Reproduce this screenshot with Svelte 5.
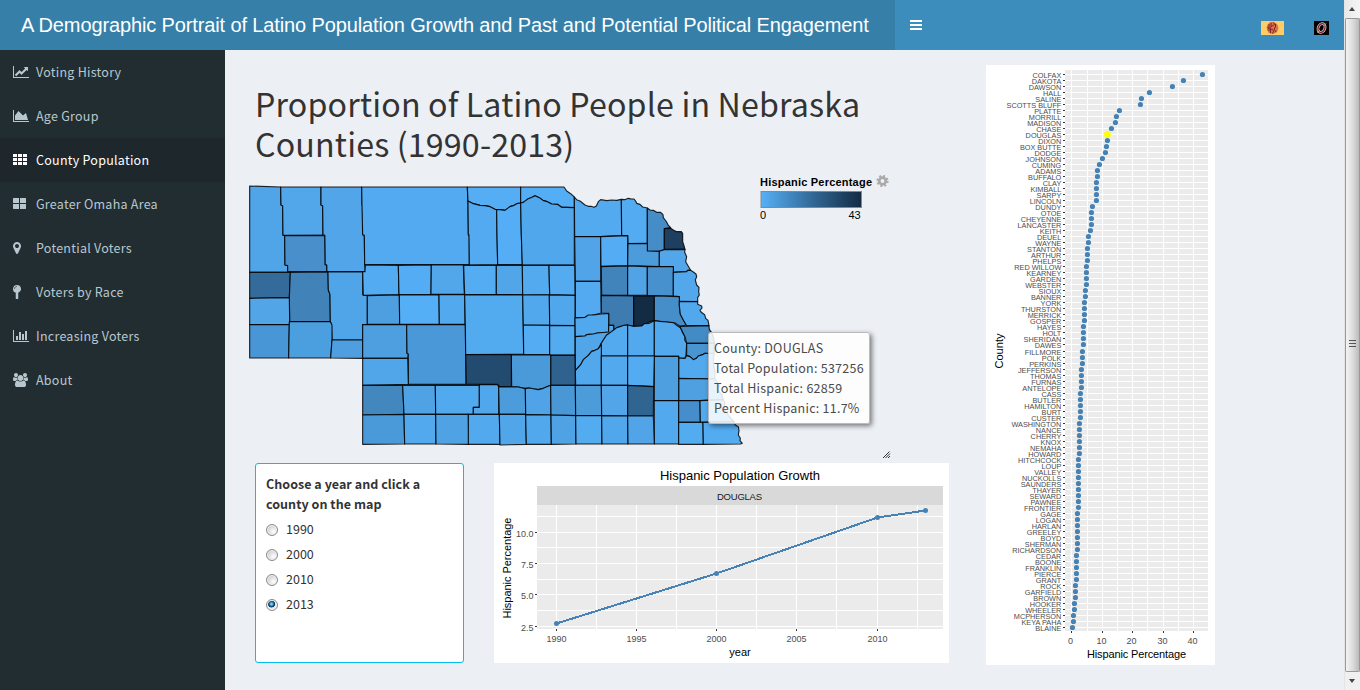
<script>
  const menu = [
    { label: 'Voting History', icon: 'line' },
    { label: 'Age Group', icon: 'area' },
    { label: 'County Population', icon: 'th', active: true },
    { label: 'Greater Omaha Area', icon: 'large' },
    { label: 'Potential Voters', icon: 'marker' },
    { label: 'Voters by Race', icon: 'pin' },
    { label: 'Increasing Voters', icon: 'bar' },
    { label: 'About', icon: 'users' }
  ];

  const icons = {
    line: 'M2048 1536v128h-2048v-1536h128v1408h1920zM1920 288v435q0 21-19.5 29.5t-35.5-7.5l-121-121-633 633q-10 10-23 10t-23-10l-233-233-416 416-192-192 585-585q10-10 23-10t23 10l233 233 464-464-121-121q-16-16-7.5-35.5t29.5-19.5h435q14 0 23 9t9 23z',
    area: 'M2048 1536v128h-2048v-1536h128v1408h1920zM1664 512l256 896h-1664v-576l448-576 576 576z',
    th: 'M0 128h512v384h-512zM640 128h512v384h-512zM1280 128h512v384h-512zM0 640h512v384h-512zM640 640h512v384h-512zM1280 640h512v384h-512zM0 1152h512v384h-512zM640 1152h512v384h-512zM1280 1152h512v384h-512z',
    large: 'M64 128h704v640h-768v-576zM896 128h704l64 64v576h-768zM0 896h768v640h-704l-64-64zM896 896h768v576l-64 64h-704z',
    marker: 'M768 640q0-106-75-181t-181-75-181 75-75 181 75 181 181 75 181-75 75-181zM1024 640q0 109-33 179l-364 774q-16 33-47.5 52t-67.5 19-67.5-19-46.5-52l-365-774q-33-70-33-179 0-212 150-362t362-150 362 150 150 362z',
    pin: 'M512 0a512 512 0 0 1 160 998v730q0 64-64 64h-192q-64 0-64-64v-730a512 512 0 0 1 160-998zM512 224v-64q-340 10-352 352h64q10-278 288-288z',
    bar: 'M640 896v512h-256v-512h256zM1024 384v1024h-256v-1024h256zM2048 1536v128h-2048v-1536h128v1408h1920zM1408 640v768h-256v-768h256zM1792 256v1152h-256v-1152h256z',
    users: 'M593 896q-162 5-265 128h-134q-82 0-138-40.500t-56-118.500q0-353 124-353 6 0 43.500 21t97.500 42.500 119 21.500q67 0 133-23-5 37-5 66 0 139 81 256zM1664 1533q0 120-73 189.500t-194 69.500h-874q-121 0-194-69.500t-73-189.500q0-53 3.500-103.500t14-109 26.500-108.500 43-97.500 62-81 85.500-53.500 111.500-20q10 0 43 21.500t73 48 107 48 135 21.500 135-21.500 107-48 73-48 43-21.500q61 0 111.500 20t85.500 53.500 62 81 43 97.500 26.500 108.500 14 109 3.500 103.500zM640 256q0 106-75 181t-181 75-181-75-75-181 75-181 181-75 181 75 75 181zM1344 640q0 159-112.500 271.500t-271.500 112.500-271.500-112.500-112.500-271.500 112.500-271.500 271.500-112.500 271.500 112.500 112.500 271.500zM1920 865q0 78-56 118.500t-138 40.500h-134q-103-123-265-128 81-117 81-256 0-29-5-66 66 23 133 23 59 0 119-21.500t97.500-42.500 43.500-21q124 0 124 353zM1792 256q0 106-75 181t-181 75-181-75-75-181 75-181 181-75 181 75 75 181z'
  };

  // County outlines, [fill, points]; each group is drawn at one third scale from its own origin.
  const west = [
    ['#50a4e8', '29,33 122,36 123,90 128,92 129,180 134,182 135,270 143,272 143,291 29,292'],
    ['#52a7ea', '122,36 243,36 243,90 248,92 249,180 129,181 128,92 123,90'],
    ['#51a5e8', '243,36 365,36 366,90 368,92 368,179 373,181 374,268 376,290 260,290 260,270 255,268 254,181 249,180 248,92 243,90'],
    ['#53aaf0', '365,36 682,36 684,90 685,180 688,182 688,269 374,269 373,181 368,179 366,90'],
    ['#488fcb', '134,182 254,181 255,269 260,271 260,290 143,290 143,272 135,270'],
    ['#356b9b', '29,292 151,292 148,368 29,370'],
    ['#4183b9', '151,292 264,291 265,345 270,358 271,440 149,440 148,368'],
    ['#52a5e7', '29,370 148,368 149,440 148,449 29,449'],
    ['#50a4e8', '264,291 368,290 368,359 382,362 382,448 368,449 368,495 276,495 274,448 271,440 270,358 265,345'],
    ['#4896d5', '29,449 148,449 146,549 29,549'],
    ['#4c9fdf', '148,440 271,440 276,450 276,495 273,540 272,549 146,549'],
    ['#4f9fe0', '276,495 368,495 368,550 272,549'],
    ['#53acf2', '376,270 475,271 477,359 370,361 368,290 375,290'],
    ['#54adf4', '475,271 574,270 573,358 477,359'],
    ['#51a7ea', '574,270 670,270 673,358 573,358'],
    ['#4d9fe0', '382,362 478,360 479,448 382,448'],
    ['#55aff6', '478,360 597,359 598,448 479,448'],
    ['#52a9ee', '597,359 674,359 675,448 598,448'],
    ['#4d9fdf', '368,449 500,449 501,535 505,537 503,550 368,550'],
    ['#4a98d7', '500,449 676,449 678,628 505,628 505,537 501,535'],
    ['#51a6e9', '368,550 503,550 505,628 368,631'],
    ['#4288bf', '368,631 488,631 492,718 368,720'],
    ['#4fa2e3', '488,631 586,631 587,718 492,718'],
    ['#52aaee', '586,631 718,631 718,697 700,697 700,718 587,718'],
    ['#4a99d9', '368,720 492,718 494,807 368,808'],
    ['#52a9ee', '492,718 587,718 588,807 494,807'],
    ['#4fa2e4', '587,718 685,718 686,808 588,807']
  ];

  const northeast = [
    ['#55adf4', '22,36 182,36 183,84 170,86 160,92 150,95 135,106 120,104 105,103 90,95 75,92 60,91 40,86 24,78'],
    ['#54aef5', '182,36 312,36 320,48 332,56 343,66 343,98 318,97 305,97 292,88 275,87 262,80 250,77 238,68 225,62 216,67 205,71 190,82 182,84'],
    ['#53aaf0', '24,78 40,86 60,91 75,92 90,95 105,103 110,104 111,180 113,269 28,270 27,180 25,178'],
    ['#55aef5', '110,104 120,104 135,106 150,95 160,92 170,86 182,84 184,180 187,269 113,269 111,180'],
    ['#51a7eb', '182,84 190,82 205,71 216,67 225,62 238,68 250,77 262,80 275,87 292,88 305,97 318,97 343,98 343,270 187,270 184,180'],
    ['#53aaef', '343,66 350,74 360,78 375,90 385,94 393,94 402,97 409,93 415,80 422,74 440,77 455,75 470,76 484,73 485,182 422,185 344,184'],
    ['#53abf1', '484,73 494,74 505,70 514,72 522,72 528,80 530,85 540,88 548,96 562,99 562,205 504,206 503,182 485,182'],
    ['#468cc7', '562,99 570,105 580,106 590,112 602,112 609,119 610,128 620,141 624,150 632,158 613,161 613,223 599,229 562,228'],
    ['#1f3f60', '613,161 632,160 640,165 650,170 664,170 668,175 668,200 672,212 675,223 613,223'],
    ['#50a4e7', '344,185 422,185 422,319 346,319'],
    ['#54adf4', '422,185 503,182 503,272 423,274'],
    ['#4c9bda', '504,206 562,205 562,228 598,229 598,275 503,272'],
    ['#52a6e9', '598,229 613,224 675,223 674,232 680,245 677,260 684,272 692,286 683,286 680,290 640,292 640,275 598,275'],
    ['#4184bb', '424,275 503,273 503,361 425,361'],
    ['#50a3e5', '503,273 562,275 562,361 503,361'],
    ['#4791ce', '562,275 640,275 640,363 562,361'],
    ['#52a8eb', '640,292 680,290 683,286 692,286 700,291 708,297 710,305 706,315 710,330 717,337 716,350 718,360 713,368 713,380 658,379 658,365 640,363'],
    ['#54aaf0', '346,319 422,319 424,414 400,420 375,427 346,428'],
    ['#3e7bb0', '424,361 521,363 521,454 500,450 480,455 461,465 461,451 446,450 446,416 424,414'],
    ['#132b43', '521,363 583,363 583,437 570,440 560,446 545,453 521,454'],
    ['#468ec9', '583,363 658,365 658,392 661,418 670,435 679,450 660,454 645,444 620,441 600,440 583,437'],
    ['#52a8ed', '658,379 713,380 713,388 725,393 726,399 720,406 724,412 734,419 737,430 744,436 747,452 679,451 670,435 661,418 658,392'],
    ['#54acf2', '11,271 109,271 109,359 14,359'],
    ['#51a6e9', '109,271 187,271 188,359 109,359'],
    ['#53aaee', '187,271 267,271 269,359 188,360'],
    ['#54abef', '267,271 344,271 345,361 269,359'],
    ['#52aaef', '14,359 188,360 191,538 17,539 16,450'],
    ['#52a8ec', '188,360 268,360 269,451 190,450'],
    ['#51a7eb', '268,360 345,361 345,452 269,451'],
    ['#54acf2', '190,450 269,451 269,539 191,538'],
    ['#53abf0', '269,451 345,452 345,540 269,540']
  ];

  const southeast = [
    ['#52a8ec', '345,24 375,22 385,15 400,15 425,12 446,10 446,66 435,68 412,69 400,72 380,74 375,78 346,80'],
    ['#51a6e9', '346,80 375,78 380,74 400,72 412,69 446,66 446,46 461,46 461,60 450,70 440,75 430,90 422,103 415,116 405,121 395,124 385,136 370,149 362,164 346,182'],
    ['#53aaef', '461,60 470,53 480,50 492,46 503,45 503,138 424,138 422,103 430,90 440,75'],
    ['#52a9ed', '503,45 521,49 545,48 553,41 568,40 583,32 583,138 503,138'],
    ['#52a9ed', '583,32 600,34 620,36 640,38 650,46 662,54 668,68 675,80 674,90 680,100 678,135 675,145 656,144 656,139 583,139'],
    ['#438bc5', '660,49 747,47 748,58 755,68 760,80 764,100 680,100 675,80 662,54'],
    ['#4895d2', '680,100 764,100 762,130 750,133 735,130 728,134 715,138 709,145 700,149 690,140 680,137'],
    ['#52a9ed', '656,144 675,145 680,137 690,140 700,149 709,145 715,138 728,134 735,130 762,130 760,160 765,185 764,207 656,205'],
    ['#4fa0e1', '656,205 764,207 778,225 775,240 785,255 790,269 720,272 656,272'],
    ['#4d9fe0', '583,139 656,139 656,272 583,272'],
    ['#52a8ec', '424,103 424,226 347,226 346,182 362,164 370,149 385,136 395,124 405,121 415,116'],
    ['#53a9ee', '424,138 503,138 503,226 424,226'],
    ['#53acf2', '503,138 583,138 581,230 503,226'],
    ['#306290', '272,136 345,136 346,226 272,226'],
    ['#4a99d8', '154,135 272,135 272,226 260,230 250,235 235,239 220,237 208,234 190,235 175,231 155,230'],
    ['#234b6f', '17,134 154,134 154,230 120,230 112,223 19,223'],
    ['#51a7eb', '58,224 112,224 116,230 116,313 40,313 40,292 58,292'],
    ['#4c9cdc', '116,230 175,231 196,236 197,313 118,313'],
    ['#4fa3e6', '196,236 208,234 235,239 250,235 272,226 273,315 197,314'],
    ['#4997d5', '272,226 346,226 347,317 273,315'],
    ['#4c9cda', '346,226 424,226 425,317 347,317'],
    ['#51a5e8', '424,226 503,226 503,318 425,317'],
    ['#306592', '503,226 581,230 580,318 503,318'],
    ['#52a9ee', '583,272 656,272 656,402 583,402'],
    ['#468ecb', '656,272 720,272 721,337 656,337'],
    ['#52aaee', '720,272 790,269 795,280 792,295 804,315 822,335 721,337'],
    ['#53abf0', '656,337 729,337 730,403 656,403'],
    ['#53abf0', '729,337 822,335 826,345 835,350 837,362 835,375 841,385 840,392 847,400 842,402 730,403'],
    ['#52a9ed', '25,313 118,313 120,403 25,403'],
    ['#51a6ea', '118,313 197,313 199,403 120,405'],
    ['#52a8ec', '197,314 273,315 274,403 199,403'],
    ['#4fa3e5', '273,315 347,317 348,402 274,403'],
    ['#53abf0', '347,317 425,317 426,402 348,402'],
    ['#51a7eb', '425,317 503,318 504,402 426,402'],
    ['#50a4e7', '503,318 580,318 583,402 504,402']
  ];

  const mapGroups = [
    { at: 'translate(0 0) scale(.33333)', counties: west },
    { at: 'translate(220 0) scale(.33333)', counties: northeast },
    { at: 'translate(220 135) scale(.33333)', counties: southeast }
  ];

  // Runs of counties sharing the same rounded percentage position on the dot plot.
  const runs = [
    [667, 'COLFAX'], [610, 'DAKOTA'], [577, 'DAWSON'], [508, 'HALL'], [484, 'SALINE'], [481, 'SCOTTS BLUFF'],
    [418, 'PLATTE'], [409, 'MORRILL'], [406, 'MADISON'], [394, 'CHASE'], [382, 'DOUGLAS,DIXON'], [379, 'BOX BUTTE'],
    [376, 'DODGE'], [367, 'JOHNSON'], [358, 'CUMING'], [352, 'ADAMS,BUFFALO'], [349, 'CLAY,KIMBALL,SARPY,LINCOLN'],
    [337, 'DUNDY'], [334, 'OTOE,CHEYENNE,LANCASTER'], [331, 'KEITH'], [325, 'DEUEL,WAYNE'],
    [322, 'STANTON,ARTHUR,PHELPS'], [319, 'RED WILLOW,KEARNEY,GARDEN,WEBSTER'], [316, 'SIOUX,BANNER'],
    [313, 'YORK,THURSTON,MERRICK,GOSPER'], [310, 'HAYES,HOLT,SHERIDAN,DAWES'], [307, 'FILLMORE,POLK,PERKINS'],
    [304, 'JEFFERSON,THOMAS,FURNAS,ANTELOPE'], [301, 'CASS,BUTLER,HAMILTON,BURT,CUSTER'],
    [298, 'WASHINGTON,NANCE,CHERRY,KNOX,NEMAHA,HOWARD'],
    [295, 'HITCHCOCK,LOUP,VALLEY,NUCKOLLS,SAUNDERS,THAYER,SEWARD,PAWNEE,FRONTIER'],
    [292, 'GAGE,LOGAN,HARLAN,GREELEY,BOYD,SHERMAN,RICHARDSON'], [289, 'CEDAR,BOONE,FRANKLIN,PIERCE,GRANT'],
    [286, 'ROCK,GARFIELD,BROWN'], [283, 'HOOKER,WHEELER'], [280, 'MCPHERSON,KEYA PAHA'], [277, 'BLAINE']
  ];
  const dots = runs.flatMap(([x, names]) => names.split(',').map((name) => ({ name, x: x / 3 - 5.9 })));
  const rowY = (i) => Math.round(9 + (i * 553) / (dots.length - 1)) + 0.5;
  const percentLines = [85.5, 101.5, 116.5, 131.5, 146.5, 161.5, 177.5, 192.5, 207.5];
  const percentTicks = [[85.5, '0'], [116.5, '10'], [146.5, '20'], [177.5, '30'], [207.5, '40']];

  const yearLines = [62.5, 102.5, 142.5, 182.5, 222.5, 262.5, 302.5, 342.5, 383.5, 423.5];
  const yearTicks = [[62.5, '1990'], [142.5, '1995'], [222.5, '2000'], [302.5, '2005'], [383.5, '2010']];
  const valueLines = [53.5, 69.5, 84.5, 100.5, 116.5, 131.5, 147.5, 163.5];
  const valueTicks = [[69.5, '10.0'], [100.5, '7.5'], [131.5, '5.0'], [163.5, '2.5']];
  const growth = [[62.5, 160.5], [222.5, 110.5], [383.5, 54.5], [431.5, 47.5]];

  const years = ['1990', '2000', '2010', '2013'];
  let year = $state('2013');
</script>

<div class="app">
  <header>
    <div class="brand"><span>A Demographic Portrait of Latino Population Growth and Past and Potential Political Engagement</span></div>
    <nav>
      <svg class="burger" width="12" height="10" viewBox="0 0 12 10"><path fill="#fff" d="M0 0h12v2H0zM0 4h12v2H0zM0 8h12v2H0z" /></svg>
      <div class="logos">
        <svg width="23" height="14" viewBox="0 0 23 14">
          <path fill="#fc6" d="M0 0h23v14H0z" />
          <circle cx="11.500" cy="7" r="5.900" fill="#dc714d" />
          <path d="M8 3v7M10 1.500v4M9.500 8v4M12 1.500c3 1 1 3-1 3.500s-2 3 0 3.500 2 3 0 4M14.500 3v3l-1.500 2 2 3M6.500 6l2 2" fill="none" stroke="#7d2427" stroke-width="1" />
        </svg>
        <svg width="15" height="14" viewBox="0 0 15 14">
          <path fill="#000" d="M0 0h15v14H0z" />
          <g transform="rotate(22 7.500 7)" fill="none"><ellipse cx="7.500" cy="7" rx="3.300" ry="4.600" stroke="#ccc" stroke-width="2.800" /><ellipse cx="7.500" cy="7" rx="3.300" ry="4.600" stroke="#7d1f2b" stroke-width="1.300" /></g>
          <path d="M3.500 11.500L6 9M9.500 5L12 2.500" stroke="#bbb" stroke-width=".8" />
        </svg>
      </div>
    </nav>
    <div class="scroll-head"><i class="up"></i></div>
  </header>

  <div class="body">
    <aside>
      {#each menu as item}
        <a class:active={item.active}>
          <svg width="16" height="14" viewBox="0 0 2048 1792"><path fill="currentColor" fill-rule="evenodd" d={icons[item.icon]} /></svg>
          <span>{item.label}</span>
        </a>
      {/each}
    </aside>

    <main>
      <section class="left">
        <h1>Proportion of Latino People in Nebraska<br />Counties (1990-2013)</h1>
        <div class="map">
          <svg width="720" height="288" viewBox="0 0 720 288">
            <defs>
              <linearGradient id="scale"><stop offset="0" stop-color="#56b1f7" /><stop offset=".5" stop-color="#336a98" /><stop offset="1" stop-color="#132b43" /></linearGradient>
            </defs>
            {#each mapGroups as group}
              <g transform={group.at}>
                {#each group.counties as [fill, points]}
                  <polygon {fill} {points} />
                {/each}
              </g>
            {/each}
            <text x="520" y="11" class="legend bold" textLength="112">Hispanic Percentage</text>
            <rect x="521" y="16.500" width="100.500" height="16" fill="url(#scale)" stroke="#888" />
            <text x="520" y="44" class="legend">0</text>
            <text x="608.500" y="44" class="legend">43</text>
            <g transform="translate(642.500 6)" fill="none" stroke="#aaa">
              <circle r="3.300" stroke-width="2.800" />
              <circle r="5.100" stroke-width="2" stroke-dasharray="2.003 2.003" />
            </g>
            <path d="M643 283l6.500-6.500M645.500 283l4.500-4.500M648 283l2-2" stroke="#333" stroke-width="1" />
          </svg>
          <div class="tooltip">
            <div>County: DOUGLAS</div>
            <div>Total Population: 537256</div>
            <div>Total Hispanic: 62859</div>
            <div>Percent Hispanic: 11.7%</div>
          </div>
        </div>

        <div class="row">
          <div class="box">
            <strong>Choose a year and click a<br />county on the map</strong>
            {#each years as y}
              <label>
                <input type="radio" name="year" value={y} bind:group={year} />
                <span>{y}</span>
              </label>
            {/each}
          </div>

          <svg class="growth" width="455" height="200" viewBox="0 0 455 200">
            <rect x="43" y="23" width="406" height="19" fill="#d9d9d9" />
            <rect x="43" y="42" width="406" height="124" fill="#ebebeb" />
            <g stroke="#fff">
              {#each yearLines as x}<path d="M{x} 42V166" />{/each}
              {#each valueLines as y}<path d="M43 {y}H449" />{/each}
            </g>
            <g stroke="#333">
              {#each yearTicks as [x]}<path d="M{x} 166v2" />{/each}
              {#each valueTicks as [y]}<path d="M41 {y}h2" />{/each}
            </g>
            <polyline points={growth.map((p) => p.join()).join(' ')} fill="none" stroke="#4682b4" stroke-width="2" shape-rendering="crispEdges" />
            {#each growth as [cx, cy]}<circle {cx} {cy} r="2.500" fill="#4682b4" />{/each}
            <text class="title" x="246" y="17" text-anchor="middle" textLength="160">Hispanic Population Growth</text>
            <text class="strip" x="245.500" y="37" text-anchor="middle" textLength="45">DOUGLAS</text>
            {#each yearTicks as [x, t]}<text class="tick" {x} y="179" text-anchor="middle">{t}</text>{/each}
            {#each valueTicks as [y, t]}<text class="tick" x="39.500" y={y + 4} text-anchor="end">{t}</text>{/each}
            <text class="axis" x="246" y="193" text-anchor="middle">year</text>
            <text class="axis" transform="translate(17 105) rotate(-90)" text-anchor="middle" textLength="101">Hispanic Percentage</text>
          </svg>
        </div>
      </section>

      <svg class="counties" width="229" height="600" viewBox="0 0 229 600">
        <rect x="79" y="5" width="143" height="561" fill="#ebebeb" />
        <g stroke="#fff">
          {#each percentLines as x}<path d="M{x} 5V566" />{/each}
          {#each dots as _, i}<path d="M79 {rowY(i)}H222" />{/each}
        </g>
        <g stroke="#333">
          {#each dots as _, i}<path d="M77 {rowY(i)}h2" />{/each}
          {#each percentTicks as [x]}<path d="M{x} 566v2" />{/each}
        </g>
        {#each dots as d, i}
          <text class="county" x="75.300" y={rowY(i) + 3.3} text-anchor="end">{d.name}</text>
          <circle cx={d.x} cy={rowY(i)} r={d.name === 'DOUGLAS' ? 3.4 : 2.6} fill={d.name === 'DOUGLAS' ? '#ff0' : '#4682b4'} />
        {/each}
        {#each percentTicks as [x, t]}<text class="tick" x={x - 1} y="579" text-anchor="middle">{t}</text>{/each}
        <text class="axis" x="150.500" y="593" text-anchor="middle" textLength="99">Hispanic Percentage</text>
        <text class="axis" transform="translate(17 286) rotate(-90)" text-anchor="middle" textLength="35">County</text>
      </svg>
    </main>

    <div class="scrollbar"><div class="thumb"><i></i><i></i><i></i></div><div class="foot"><i class="down"></i></div></div>
  </div>
</div>

<style>
  :global(body) { overflow: hidden; }
  .app { width: 1360px; height: 690px; display: flex; flex-direction: column; font-family: "Noto Sans CJK SC", "Noto Sans", sans-serif; font-size: 12.5px; color: #333; background: #ecf0f5; }
  header { display: flex; height: 50px; flex: none; }
  .brand { width: 895px; background: #367fa9; color: #fff; font: 20px/50px "Liberation Sans", Arial, sans-serif; letter-spacing: -.125px; white-space: nowrap; padding-left: 21px; box-sizing: border-box; }
  nav { flex: 1; background: #3c8dbc; display: flex; justify-content: space-between; padding: 20px 15px 0 15px; }
  .burger { display: block; }
  .logos { display: flex; gap: 30px; padding-top: 1px; }
  .body { display: flex; flex: 1; min-height: 0; }
  aside { width: 225px; background: #222d32; flex: none; }
  aside a { display: flex; align-items: center; height: 44px; padding-left: 13px; gap: 7px; color: #b8c7ce; letter-spacing: .25px; }
  aside span { margin-top: -2px; }
  aside a.active { background: #1e282c; color: #fff; }
  main { flex: 1; display: flex; gap: 26px; padding: 15px 0 0 15px; align-items: flex-start; }
  .left { width: 720px; flex: none; }
  h1 { margin: 19px 0 0 15px; height: 91px; font-size: 32.2px; font-weight: 400; line-height: 39.6px; letter-spacing: .16px; white-space: nowrap; }
  .map { position: relative; height: 288px; }
  .map svg { display: block; }
  polygon { stroke: #000; stroke-width: 3.4; stroke-linejoin: round; stroke-opacity: .85; }
  text { font-family: "Liberation Sans", Arial, sans-serif; fill: #000; }
  .legend { font-size: 11px; }
  .bold { font-weight: 700; }
  .tooltip { position: absolute; left: 468px; top: 157px; width: 162px; height: 92px; box-sizing: border-box; border: 1px solid #bbb; border-radius: 3px; background: rgba(255, 255, 255, .87); box-shadow: 2px 2px 5px rgba(0, 0, 0, .5); padding: 5px; line-height: 20px; letter-spacing: .25px; color: #4a4a4a; white-space: nowrap; }
  .row { display: flex; gap: 30px; padding-left: 15px; }
  .box { width: 209px; height: 200px; box-sizing: border-box; border: 1px solid #00c0ef; border-radius: 3px; background: #fff; padding: 10px; line-height: 20px; white-space: nowrap; }
  .box strong { display: block; margin-bottom: 3px; letter-spacing: .04px; }
  .box label { display: flex; align-items: center; height: 25px; gap: 8px; font-size: 12.5px; }
  .box label span { margin-top: -2px; }
  input { appearance: none; margin: 0; width: 12px; height: 12px; border: 1px solid #8a8a8a; border-radius: 50%; background: radial-gradient(circle at 65% 65%, #fff, #c8cbd0 75%); box-shadow: inset 0 0 0 1px #f4f4f4; }
  input:checked { background: radial-gradient(circle at 45% 40%, #6ed3f7 0 10%, #1b74a8 25%, #0c2f52 40%, #e4e8eb 46%); }
  .growth, .counties { display: block; background: #fff; flex: none; }
  .title { font-size: 13px; }
  .strip { font-size: 9.5px; fill: #1a1a1a; }
  .tick { font-size: 9px; fill: #4d4d4d; }
  .axis { font-size: 11px; }
  .county { font-size: 7.3px; fill: #4d4d4d; }
  .scroll-head, .scrollbar { width: 16px; flex: none; background: #f0f0f0; }
  .scroll-head { border-left: 1px solid #e4e4e4; box-sizing: border-box; background: linear-gradient(90deg, #e9e9e9, #f5f5f5); position: relative; }
  .up, .down { display: block; width: 0; border: 3.5px solid transparent; }
  .scroll-head .up { border-bottom: 4px solid #444; border-top: 0; margin: 7px 0 0 4px; }
  .scroll-head::after { content: ""; position: absolute; left: 0; top: 18px; bottom: 0; width: 15px; box-sizing: border-box; border: 1px solid #999; border-bottom: 0; border-radius: 2px 2px 0 0; background: linear-gradient(90deg, #f4f4f4, #ddd 50%, #bbb); }
  .scrollbar { display: flex; flex-direction: column; border-left: 1px solid #e4e4e4; box-sizing: border-box; }
  .thumb { height: 622px; box-sizing: border-box; border: 1px solid #999; border-top: 0; border-radius: 0 0 2px 2px; background: linear-gradient(90deg, #f4f4f4, #ddd 50%, #bbb); display: flex; flex-direction: column; align-items: center; gap: 2px; padding-top: 290px; }
  .thumb i { width: 7px; height: 1px; background: #555; }
  .down { border-top: 4px solid #444; border-bottom: 0; margin: 7px 0 0 4px; }
</style>
